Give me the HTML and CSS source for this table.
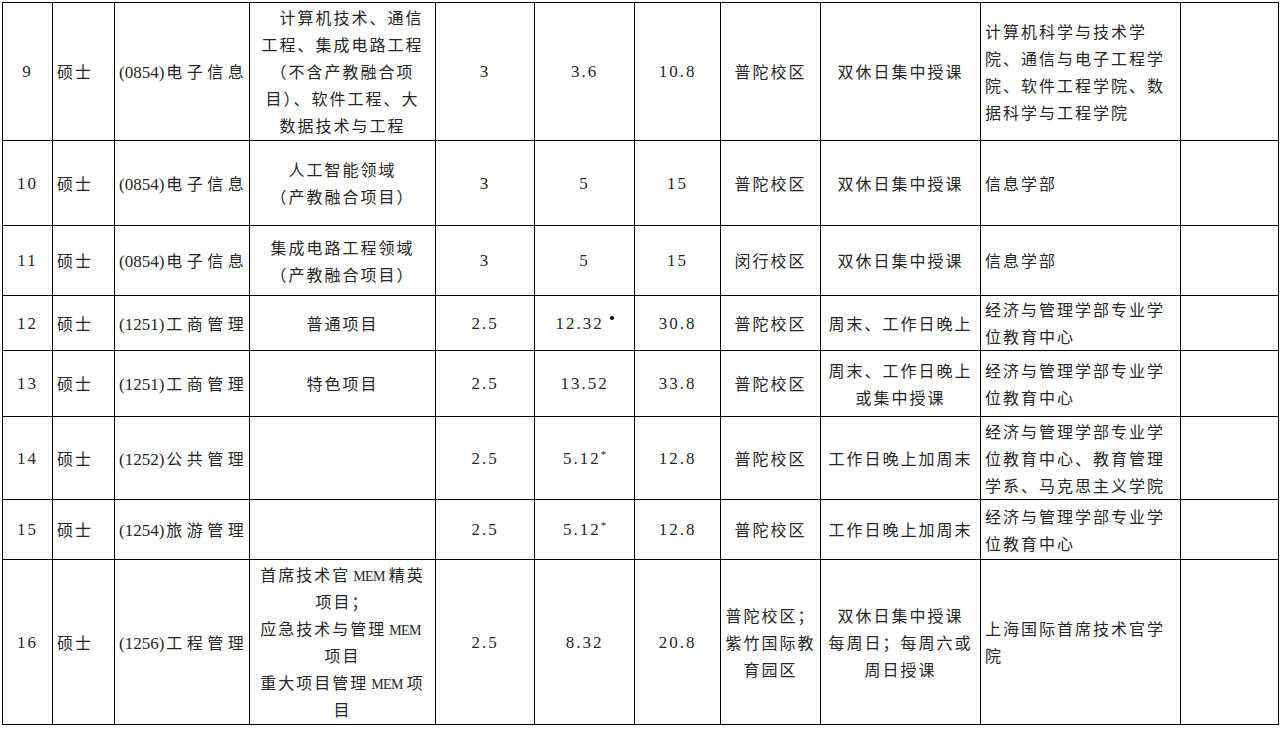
FILE: index.html
```html
<!DOCTYPE html>
<html lang="zh-CN">
<head>
<meta charset="utf-8">
<title>专业学位招生表</title>
<link rel="stylesheet" href="styles.css">
</head>
<body>
<table class="sheet">
  <colgroup>
    <col class="w-no"><col class="w-deg"><col class="w-major"><col class="w-dir">
    <col class="w-yr"><col class="w-fee"><col class="w-total"><col class="w-campus">
    <col class="w-mode"><col class="w-dept"><col class="w-note">
  </colgroup>
  <tbody>
    <tr class="r9">
      <td class="num">9</td>
      <td class="deg">硕士</td>
      <td class="major"><span class="code">(0854)</span>电子信息</td>
      <td class="ctr indent">计算机技术、通信<br>工程、集成电路工程<br>（不含产教融合项<br>目）、软件工程、大<br>数据技术与工程</td>
      <td class="num">3</td>
      <td class="num">3.6</td>
      <td class="num">10.8</td>
      <td class="ctr">普陀校区</td>
      <td class="ctr">双休日集中授课</td>
      <td class="dept">计算机科学与技术学<br>院、通信与电子工程学<br>院、软件工程学院、数<br>据科学与工程学院</td>
      <td></td>
    </tr>
    <tr class="r10">
      <td class="num">10</td>
      <td class="deg">硕士</td>
      <td class="major"><span class="code">(0854)</span>电子信息</td>
      <td class="ctr">人工智能领域<br>（产教融合项目）</td>
      <td class="num">3</td>
      <td class="num">5</td>
      <td class="num">15</td>
      <td class="ctr">普陀校区</td>
      <td class="ctr">双休日集中授课</td>
      <td class="dept">信息学部</td>
      <td></td>
    </tr>
    <tr class="r11">
      <td class="num">11</td>
      <td class="deg">硕士</td>
      <td class="major"><span class="code">(0854)</span>电子信息</td>
      <td class="ctr">集成电路工程领域<br>（产教融合项目）</td>
      <td class="num">3</td>
      <td class="num">5</td>
      <td class="num">15</td>
      <td class="ctr">闵行校区</td>
      <td class="ctr">双休日集中授课</td>
      <td class="dept">信息学部</td>
      <td></td>
    </tr>
    <tr class="r12">
      <td class="num">12</td>
      <td class="deg">硕士</td>
      <td class="major"><span class="code">(1251)</span>工商管理</td>
      <td class="ctr">普通项目</td>
      <td class="num">2.5</td>
      <td class="num">12.32<span class="dot"></span></td>
      <td class="num">30.8</td>
      <td class="ctr">普陀校区</td>
      <td class="ctr">周末、工作日晚上</td>
      <td class="dept">经济与管理学部专业学<br>位教育中心</td>
      <td></td>
    </tr>
    <tr class="r13">
      <td class="num">13</td>
      <td class="deg">硕士</td>
      <td class="major"><span class="code">(1251)</span>工商管理</td>
      <td class="ctr">特色项目</td>
      <td class="num">2.5</td>
      <td class="num">13.52</td>
      <td class="num">33.8</td>
      <td class="ctr">普陀校区</td>
      <td class="ctr">周末、工作日晚上<br>或集中授课</td>
      <td class="dept">经济与管理学部专业学<br>位教育中心</td>
      <td></td>
    </tr>
    <tr class="r14">
      <td class="num">14</td>
      <td class="deg">硕士</td>
      <td class="major"><span class="code">(1252)</span>公共管理</td>
      <td></td>
      <td class="num">2.5</td>
      <td class="num">5.12<sup class="star">*</sup></td>
      <td class="num">12.8</td>
      <td class="ctr">普陀校区</td>
      <td class="ctr">工作日晚上加周末</td>
      <td class="dept">经济与管理学部专业学<br>位教育中心、教育管理<br>学系、马克思主义学院</td>
      <td></td>
    </tr>
    <tr class="r15">
      <td class="num">15</td>
      <td class="deg">硕士</td>
      <td class="major"><span class="code">(1254)</span>旅游管理</td>
      <td></td>
      <td class="num">2.5</td>
      <td class="num">5.12<sup class="star">*</sup></td>
      <td class="num">12.8</td>
      <td class="ctr">普陀校区</td>
      <td class="ctr">工作日晚上加周末</td>
      <td class="dept">经济与管理学部专业学<br>位教育中心</td>
      <td></td>
    </tr>
    <tr class="r16">
      <td class="num">16</td>
      <td class="deg">硕士</td>
      <td class="major"><span class="code">(1256)</span>工程管理</td>
      <td class="ctr">首席技术官<span class="latin">MEM</span>精英<br>项目；<br>应急技术与管理<span class="latin">MEM</span><br>项目<br>重大项目管理<span class="latin">MEM</span>项<br>目</td>
      <td class="num">2.5</td>
      <td class="num">8.32</td>
      <td class="num">20.8</td>
      <td class="ctr">普陀校区；<br>紫竹国际教<br>育园区</td>
      <td class="ctr">双休日集中授课<br>每周日；每周六或<br>周日授课</td>
      <td class="dept">上海国际首席技术官学<br>院</td>
      <td></td>
    </tr>
  </tbody>
</table>
</body>
</html>
```

FILE: styles.css
```css
body {
  margin: 0;
  background: #ffffff;
  font-family: "Noto Sans CJK SC", sans-serif;
}

.sheet {
  border-collapse: collapse;
  table-layout: fixed;
  width: 1276px;
  margin: 2px 0 0 2px;
  font-size: 16px;
  line-height: 27px;
  letter-spacing: 2px;
  color: #262626;
}

.sheet td {
  border: 1px solid #000000;
  padding: 0 4px;
  vertical-align: middle;
  white-space: nowrap;
  overflow: hidden;
}

.w-no { width: 50px; }
.w-deg { width: 62px; }
.w-major { width: 135px; }
.w-dir { width: 186px; }
.w-yr { width: 99px; }
.w-fee { width: 100px; }
.w-total { width: 86px; }
.w-campus { width: 100px; }
.w-mode { width: 160px; }
.w-dept { width: 200px; }
.w-note { width: 98px; }

.r9 { height: 138px; }
.r10 { height: 85px; }
.r11 { height: 70px; }
.r12 { height: 54px; }
.r13 { height: 66px; }
.r14 { height: 83px; }
.r15 { height: 60px; }
.r16 { height: 165px; }

.num {
  font-family: "Liberation Serif", "Noto Sans CJK SC", serif;
  font-size: 17px;
  text-align: center;
}

.deg {
  text-align: left;
}

.major {
  text-align: left;
  letter-spacing: 4.5px;
  padding: 0 0 0 5px;
}

.code {
  font-family: "Liberation Serif", serif;
  font-size: 17px;
  line-height: 1;
  letter-spacing: 0;
  margin-right: 2px;
}

.ctr {
  text-align: center;
}

.indent {
  text-indent: 18px;
}

.dept {
  text-align: left;
}

.latin {
  font-family: "Liberation Serif", serif;
  font-size: 14px;
  line-height: 1;
  letter-spacing: -0.6px;
  margin: 0 4px 0 3px;
}

.dot {
  display: inline-block;
  width: 4px;
  height: 4px;
  border-radius: 50%;
  background: #000000;
  margin-left: 6px;
  vertical-align: 9px;
}

.star {
  font-size: 11px;
  letter-spacing: 0;
  vertical-align: 6px;
  line-height: 0;
}
```
